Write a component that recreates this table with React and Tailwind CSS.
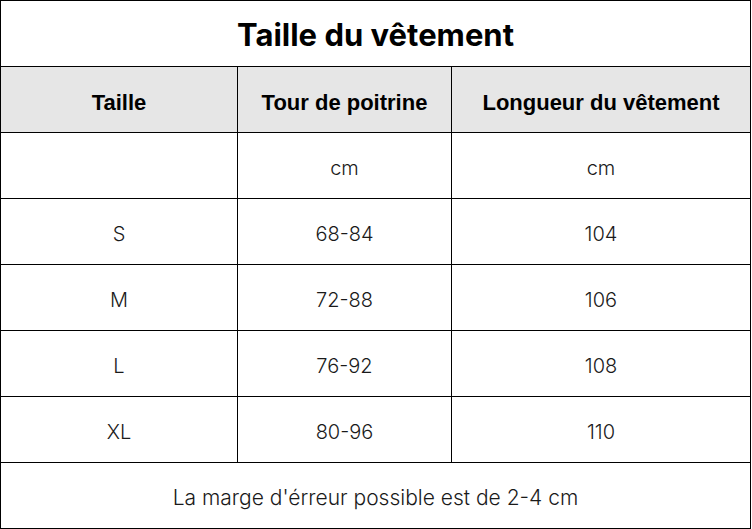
const rows = [
  ['', 'cm', 'cm'],
  ['S', '68-84', '104'],
  ['M', '72-88', '106'],
  ['L', '76-92', '108'],
  ['XL', '80-96', '110'],
];

const cols = 'grid grid-cols-[237px_214px_299px]';
const body = "font-['Inter','Noto_Sans',sans-serif] font-light text-[#1a1a1a]";

export default function App() {
  return (
    <div className="w-[752px] h-[529px] bg-white">
      <div className="w-[751px] border-l border-t border-black text-black">
        <div className="h-[66px] border-r border-b border-black flex items-center justify-center text-[31px] font-bold font-['Inter',Arial,sans-serif] pt-[4px]">
          Taille du vêtement
        </div>
        <div className={cols + " bg-[#e6e6e6] font-['Liberation_Sans',Arial,sans-serif] font-bold text-[22px]"}>
          {['Taille', 'Tour de poitrine', 'Longueur du vêtement'].map((h) => (
            <div key={h} className="h-[66px] border-r border-b border-black flex items-center justify-center pt-[6px]">
              {h}
            </div>
          ))}
        </div>
        {rows.map((r, i) => (
          <div key={i} className={cols + ' text-[20px] ' + body}>
            {r.map((c, j) => (
              <div key={j} className="h-[66px] border-r border-b border-black flex items-center justify-center pt-[4px]">
                {c}
              </div>
            ))}
          </div>
        ))}
        <div className={'h-[66px] border-r border-b border-black flex items-center justify-center pt-[4px] text-[21px] ' + body}>
          La marge d'érreur possible est de 2-4 cm
        </div>
      </div>
    </div>
  );
}
